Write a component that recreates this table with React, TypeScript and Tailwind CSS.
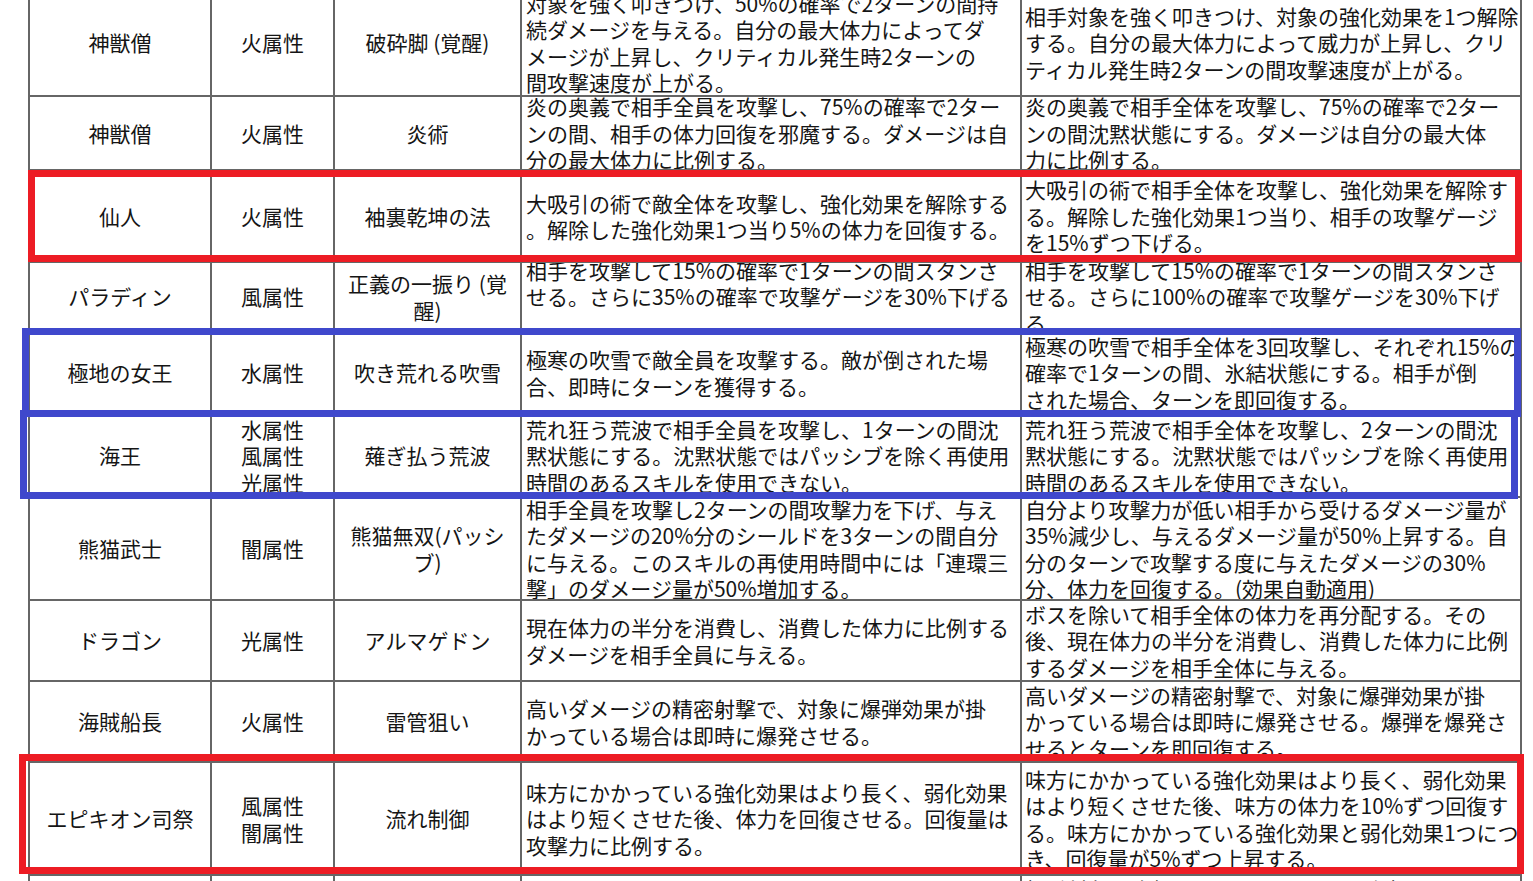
import React from "react";

type Row = {
    name: string[];
    attr: string[];
    skill: string[];
    before: string[];
    after: string[];
};

// skill comparison sheet, lines broken as in the sheet
const ROWS: Row[] = [
    {
        name: ["神獣僧"],
        attr: ["火属性"],
        skill: ["破砕脚 (覚醒)"],
        before: [
            "対象を強く叩きつけ、50%の確率で2ターンの間持",
            "続ダメージを与える。自分の最大体力によってダ",
            "メージが上昇し、クリティカル発生時2ターンの",
            "間攻撃速度が上がる。",
        ],
        after: [
            "相手対象を強く叩きつけ、対象の強化効果を1つ解除",
            "する。自分の最大体力によって威力が上昇し、クリ",
            "ティカル発生時2ターンの間攻撃速度が上がる。",
        ],
    },
    {
        name: ["神獣僧"],
        attr: ["火属性"],
        skill: ["炎術"],
        before: [
            "炎の奥義で相手全員を攻撃し、75%の確率で2ター",
            "ンの間、相手の体力回復を邪魔する。ダメージは自",
            "分の最大体力に比例する。",
        ],
        after: [
            "炎の奥義で相手全体を攻撃し、75%の確率で2ター",
            "ンの間沈黙状態にする。ダメージは自分の最大体",
            "力に比例する。",
        ],
    },
    {
        name: ["仙人"],
        attr: ["火属性"],
        skill: ["袖裏乾坤の法"],
        before: [
            "大吸引の術で敵全体を攻撃し、強化効果を解除する",
            "。解除した強化効果1つ当り5%の体力を回復する。",
        ],
        after: [
            "大吸引の術で相手全体を攻撃し、強化効果を解除す",
            "る。解除した強化効果1つ当り、相手の攻撃ゲージ",
            "を15%ずつ下げる。",
        ],
    },
    {
        name: ["パラディン"],
        attr: ["風属性"],
        skill: ["正義の一振り (覚", "醒)"],
        before: [
            "相手を攻撃して15%の確率で1ターンの間スタンさ",
            "せる。さらに35%の確率で攻撃ゲージを30%下げる",
            "。",
        ],
        after: [
            "相手を攻撃して15%の確率で1ターンの間スタンさ",
            "せる。さらに100%の確率で攻撃ゲージを30%下げ",
            "る。",
        ],
    },
    {
        name: ["極地の女王"],
        attr: ["水属性"],
        skill: ["吹き荒れる吹雪"],
        before: [
            "極寒の吹雪で敵全員を攻撃する。敵が倒された場",
            "合、即時にターンを獲得する。",
        ],
        after: [
            "極寒の吹雪で相手全体を3回攻撃し、それぞれ15%の",
            "確率で1ターンの間、氷結状態にする。相手が倒",
            "された場合、ターンを即回復する。",
        ],
    },
    {
        name: ["海王"],
        attr: ["水属性", "風属性", "光属性"],
        skill: ["薙ぎ払う荒波"],
        before: [
            "荒れ狂う荒波で相手全員を攻撃し、1ターンの間沈",
            "黙状態にする。沈黙状態ではパッシブを除く再使用",
            "時間のあるスキルを使用できない。",
        ],
        after: [
            "荒れ狂う荒波で相手全体を攻撃し、2ターンの間沈",
            "黙状態にする。沈黙状態ではパッシブを除く再使用",
            "時間のあるスキルを使用できない。",
        ],
    },
    {
        name: ["熊猫武士"],
        attr: ["闇属性"],
        skill: ["熊猫無双(パッシ", "ブ)"],
        before: [
            "相手全員を攻撃し2ターンの間攻撃力を下げ、与え",
            "たダメージの20%分のシールドを3ターンの間自分",
            "に与える。このスキルの再使用時間中には「連環三",
            "撃」のダメージ量が50%増加する。",
        ],
        after: [
            "自分より攻撃力が低い相手から受けるダメージ量が",
            "35%減少し、与えるダメージ量が50%上昇する。自",
            "分のターンで攻撃する度に与えたダメージの30%",
            "分、体力を回復する。(効果自動適用)",
        ],
    },
    {
        name: ["ドラゴン"],
        attr: ["光属性"],
        skill: ["アルマゲドン"],
        before: [
            "現在体力の半分を消費し、消費した体力に比例する",
            "ダメージを相手全員に与える。",
        ],
        after: [
            "ボスを除いて相手全体の体力を再分配する。その",
            "後、現在体力の半分を消費し、消費した体力に比例",
            "するダメージを相手全体に与える。",
        ],
    },
    {
        name: ["海賊船長"],
        attr: ["火属性"],
        skill: ["雷管狙い"],
        before: [
            "高いダメージの精密射撃で、対象に爆弾効果が掛",
            "かっている場合は即時に爆発させる。",
        ],
        after: [
            "高いダメージの精密射撃で、対象に爆弾効果が掛",
            "かっている場合は即時に爆発させる。爆弾を爆発さ",
            "せるとターンを即回復する。",
        ],
    },
    {
        name: ["エピキオン司祭"],
        attr: ["風属性", "闇属性"],
        skill: ["流れ制御"],
        before: [
            "味方にかかっている強化効果はより長く、弱化効果",
            "はより短くさせた後、体力を回復させる。回復量は",
            "攻撃力に比例する。",
        ],
        after: [
            "味方にかかっている強化効果はより長く、弱化効果",
            "はより短くさせた後、味方の体力を10%ずつ回復す",
            "る。味方にかかっている強化効果と弱化効果1つにつ",
            "き、回復量が5%ずつ上昇する。",
        ],
    },
    {
        name: ["ケンタウロス"],
        attr: ["風属性"],
        skill: ["嵐の矢"],
        before: ["相手対象を攻撃し、40%の確率で1ターン", "の間スタンさせる。"],
        after: [
            "相手対象を攻撃し、それぞれ80%の確率で1ターン",
            "の間スタンさせる。相手が倒された場合、ターン",
            "を即回復する。",
            "",
        ],
    },
];

const cell = "flex flex-col justify-center overflow-hidden border-r-2 border-b-2 border-[#666]";

function Lines({ lines }: { lines: string[] }) {
    return (
        <>
            {lines.map((l, i) => (
                <div key={i} className="whitespace-pre leading-[26.5px] shrink-0">
                    {l || "\u00a0"}
                </div>
            ))}
        </>
    );
}

export default function App() {
    return (
        <div className="relative h-[881px] w-full overflow-hidden bg-white text-[21px] text-[#151515] font-['Noto_Sans_CJK_JP','Noto_Sans_CJK_SC',sans-serif]">
            <div className="ml-[28px] -mt-[10px] w-[1494px] grid grid-cols-[182px_123px_187px_500px_500px] grid-rows-[107px_74px_92px_69px_83px_83px_103px_81px_81px_113px_107px] border-l-2 border-[#666]">
                {ROWS.map((r, i) => (
                    <React.Fragment key={i}>
                        <div className={`${cell} items-center text-center`}>
                            <Lines lines={r.name} />
                        </div>
                        <div className={`${cell} items-center text-center`}>
                            <Lines lines={r.attr} />
                        </div>
                        <div className={`${cell} items-center text-center`}>
                            <Lines lines={r.skill} />
                        </div>
                        <div className={`${cell} pl-[4px]`}>
                            <Lines lines={r.before} />
                        </div>
                        <div className={`${cell} pl-[3px]`}>
                            <Lines lines={r.after} />
                        </div>
                    </React.Fragment>
                ))}
            </div>

            {/* annotation boxes drawn over the sheet */}
            <div className="absolute left-[28px] top-[170px] w-[1494px] h-[92px] border-[7px] border-[#ED1C24]" />
            <div className="absolute left-[22px] top-[328px] w-[1499px] h-[89px] border-[7px] border-[#3F48CC]" />
            <div className="absolute left-[20px] top-[410px] w-[1498px] h-[89px] border-[7px] border-[#3F48CC]" />
            <div className="absolute left-[19px] top-[754px] w-[1505px] h-[120px] border-[7px] border-[#ED1C24]" />
        </div>
    );
}
